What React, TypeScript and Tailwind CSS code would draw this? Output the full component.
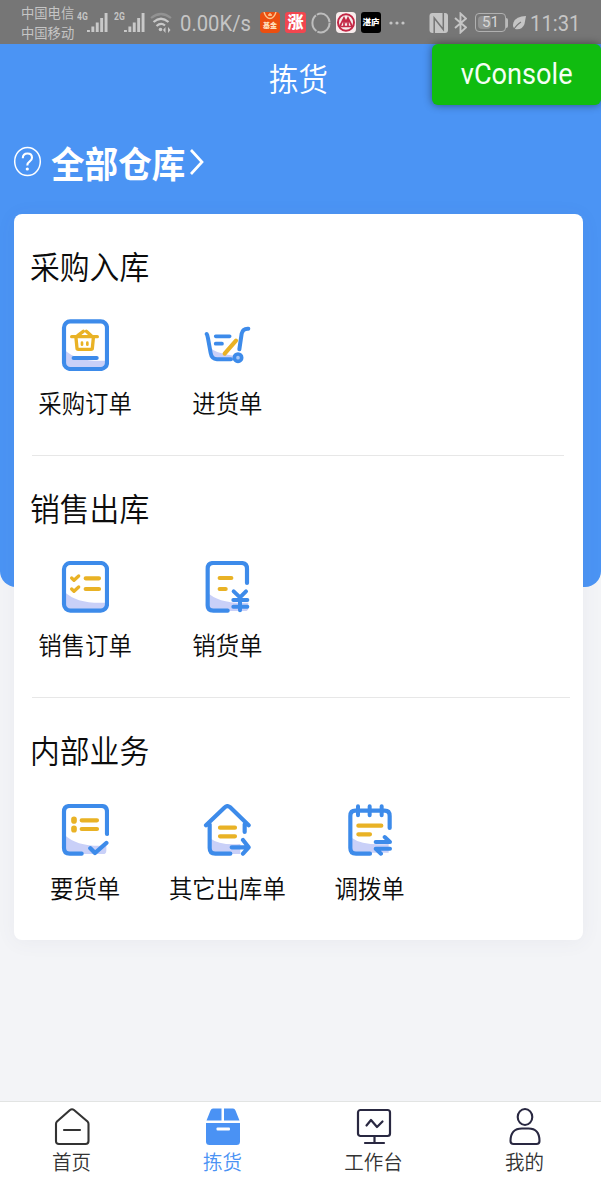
import type { ReactNode } from 'react'

const BLUE = '#3d8bea'
const GOLD = '#e9b225'
const SHADE = '#c9d0f8'

interface Entry {
  label: string
  icon: ReactNode
}

interface Section {
  title: string
  entries: Entry[]
  divider?: string
}

function EntryIcon({ children }: { children: ReactNode }) {
  return (
    <svg
      width="48"
      height="52"
      viewBox="0 0 144 156"
      fill="none"
      stroke={BLUE}
      strokeWidth="12.5"
      strokeLinecap="round"
      strokeLinejoin="round"
      className="mx-auto block"
    >
      {children}
    </svg>
  )
}

// Soft tint in the lower left corner of the paper shapes
function Shade({ d = 'M10 92 Q50 130 136 125 V140 Q136 150 126 150 H20 Q8 150 8 138 Z' }: { d?: string }) {
  return <path d={d} fill={SHADE} stroke="none" />
}

const SECTIONS: Section[] = [
  {
    title: '采购入库',
    divider: 'w-[532px]',
    entries: [
      {
        label: '采购订单',
        icon: (
          <EntryIcon>
            <Shade />
            <rect x="9" y="7" width="129" height="143" rx="19" />
            <path d="M38 117 H107" />
            <g stroke={GOLD} strokeWidth="10">
              <path d="M32 53 H109 M50 50 L67 37 M91 50 L76 37" />
              <path d="M45 57 L48 88 Q48 91 52 91 H90 Q94 91 94 88 L97 57" />
              <path d="M63 71 V77 M79 71 V77" strokeWidth="8" />
            </g>
          </EntryIcon>
        ),
      },
      {
        label: '进货单',
        icon: (
          <EntryIcon>
            <Shade d="M20 84 Q36 104 92 110 V122 H34 Q25 120 20 84 Z" />
            <path d="M11 45 Q13 47 15 58 L23 102 Q26 120 42 121 H84" strokeWidth="12" />
            <path d="M38 52 H80 M38 74 H57" strokeWidth="11" />
            <path d="M65 104 L99 65" stroke={GOLD} />
            <path d="M136 29 Q119 28 116 44 L109 91" strokeWidth="12" />
            <circle cx="105" cy="116" r="11" strokeWidth="11" fill="#a8c8f6" />
          </EntryIcon>
        ),
      },
    ],
  },
  {
    title: '销售出库',
    divider: 'w-[538px]',
    entries: [
      {
        label: '销售订单',
        icon: (
          <EntryIcon>
            <Shade />
            <rect x="9" y="6" width="129" height="143" rx="19" />
            <g stroke={GOLD}>
              <path d="M74 52 H114 M74 84 H114" />
              <path d="M32 51 L39 58 L53 45 M32 84 L39 91 L53 78" strokeWidth="10" />
            </g>
          </EntryIcon>
        ),
      },
      {
        label: '销货单',
        icon: (
          <EntryIcon>
            <Shade />
            <path d="M132 66 V23 Q132 6 115 6 H31 Q14 6 14 23 V133 Q14 149 31 149 H74" />
            <path d="M50 51 H85 M50 84 H68" stroke={GOLD} />
            <path d="M92 91 L111 109 L129 91 M111 108 V148 M91 117 H133 M91 137 H133" strokeWidth="12" />
          </EntryIcon>
        ),
      },
    ],
  },
  {
    title: '内部业务',
    entries: [
      {
        label: '要货单',
        icon: (
          <EntryIcon>
            <Shade />
            <path d="M138 90 V23 Q138 6 121 6 H26 Q9 6 9 23 V132 Q9 149 26 149 H62" />
            <path d="M88 133 L102 147 L136 117" strokeWidth="13" />
            <g stroke={GOLD}>
              <path d="M62 49 H108 M62 75 H108" />
              <path d="M39 46 V51 M39 73 V77" strokeWidth="17" />
            </g>
          </EntryIcon>
        ),
      },
      {
        label: '其它出库单',
        icon: (
          <EntryIcon>
            <Shade d="M20 102 Q50 125 112 120 V150 H34 Q20 148 20 132 Z" />
            <path d="M9 64 L64 11 Q73 2 83 11 L137 64 M20 61 V132 Q20 149 37 149 H82 M125 61 V84" />
            <path d="M86 130 H134 M120 108 L137 130 L120 149" />
            <path d="M51 71 H96 M51 97 H96" stroke={GOLD} />
          </EntryIcon>
        ),
      },
      {
        label: '调拨单',
        icon: (
          <EntryIcon>
            <Shade d="M18 102 Q48 125 128 120 V146 H34 Q14 148 14 132 Z" />
            <path d="M131 72 V36 Q131 20 116 20 H28 Q13 20 13 36 V132 Q13 149 30 149 H72" />
            <path d="M36 7 V34 M71 7 V34 M107 7 V34" strokeWidth="12" />
            <path d="M37 65 H106 M37 91 H72" stroke={GOLD} />
            <path d="M89 114 H132 L116 99 M132 134 H89 L105 149" strokeWidth="12" />
          </EntryIcon>
        ),
      },
    ],
  },
]

const TABS = [
  {
    label: '首页',
    icon: (
      <svg width="36" height="40" viewBox="0 0 36 40" fill="none" stroke="#333" strokeWidth="2.1" strokeLinejoin="round" strokeLinecap="round">
        <path d="M16 3 Q18 1.5 20 3 L33.5 14.5 Q34.5 15.4 34.5 17 V34 Q34.5 37 31.5 37 H5 Q2 37 2 34 V17 Q2 15.4 3 14.5 Z" />
        <path d="M10 23 H26" />
      </svg>
    ),
  },
  {
    label: '拣货',
    active: true,
    icon: (
      <svg width="36" height="40" viewBox="0 0 36 40" fill="#4a92f4">
        <path d="M8 1.5 H16.5 V13.5 H1.5 L5.5 3.5 Q6.3 1.5 8 1.5 Z M19 1.5 H28 Q29.7 1.5 30.5 3.5 L34.5 13.5 H19 Z" />
        <path d="M1 16 H35 V34.5 Q35 38 31.5 38 H4.5 Q1 38 1 34.5 Z" />
        <rect x="11.5" y="20.5" width="13.5" height="3" rx="1" fill="#fff" />
      </svg>
    ),
  },
  {
    label: '工作台',
    icon: (
      <svg width="36" height="40" viewBox="0 0 36 40" fill="none" stroke="#292841" strokeWidth="2.2" strokeLinejoin="round" strokeLinecap="round">
        <rect x="2" y="3" width="32" height="26" rx="2.5" />
        <path d="M18.5 29 V36 M9 36 H28" />
        <path d="M10.5 18.5 L15 13 L21 20 L26.5 14.5" />
      </svg>
    ),
  },
  {
    label: '我的',
    icon: (
      <svg width="36" height="40" viewBox="0 0 36 40" fill="none" stroke="#292841" strokeWidth="2.1" strokeLinejoin="round">
        <ellipse cx="18" cy="10" rx="7.3" ry="8" />
        <path d="M3.5 34 Q3.5 21.5 15 21.5 H21.5 Q32.5 21.5 32.5 34 Q32.5 37 29.5 37 H6.5 Q3.5 37 3.5 34 Z" />
      </svg>
    ),
  },
]

function Signal() {
  return (
    <svg className="shrink-0" width="21" height="21" viewBox="0 0 21 21" fill="#c9c9c9">
      <path d="M0 18h2.9v2H0zM4.4 14.5h2.9V20H4.4zM8.8 10.5h2.9V20H8.8zM13.2 6h2.9v14h-2.9zM17.6 1h2.9v19h-2.9z" />
    </svg>
  )
}

function StatusBar() {
  return (
    <div className="flex h-11 items-center overflow-hidden bg-[#767676] pt-px pl-[21px] font-[Roboto,'Noto_Sans_CJK_SC',sans-serif] text-[#c5c5c5]">
      <div className="w-[56px] shrink-0 pt-[3px] text-[13.3px] leading-5 whitespace-nowrap">
        <p>中国电信</p>
        <p>中国移动</p>
      </div>
      <span className="mb-3 w-[10px] shrink-0 text-[11px] leading-none font-bold">
        <span className="inline-block origin-left scale-x-[0.78]">4G</span>
      </span>
      <Signal />
      <span className="mb-3 ml-[6px] w-[10px] shrink-0 text-[11px] leading-none font-bold">
        <span className="inline-block origin-left scale-x-[0.78]">2G</span>
      </span>
      <Signal />
      <svg className="ml-[4px] shrink-0" width="24" height="22" viewBox="0 0 24 22" fill="none" stroke="#c9c9c9" strokeWidth="2.2">
        <path d="M2 6 Q12 -2 22 6" stroke="#929292" />
        <path d="M4.5 10 Q12 3.5 19.5 10 M7.5 14 Q12 10 16 13.5" />
        <circle cx="11.5" cy="17.5" r="1.8" fill="#c9c9c9" stroke="none" />
        <path d="M16.5 15 L14 18 L16.5 21 Z M19 15 L21.5 18 L19 21 Z" fill="#c9c9c9" stroke="none" />
      </svg>
      <span className="ml-[7px] w-[80px] shrink-0 pt-[3px] text-[22px] leading-none">
        <span className="inline-block origin-left scale-x-[0.92]">0.00K/s</span>
      </span>
      <div className="flex w-[144px] shrink-0 items-center gap-[5px]">
        <div className="relative h-[21px] w-[20px] overflow-hidden rounded-[4px] bg-[#ec4f10] text-center text-[7px] leading-[29px] font-black whitespace-nowrap text-[#ffe0bc]">
          <svg className="absolute top-0 left-[3px]" width="14" height="8" viewBox="0 0 14 8" fill="none" stroke="#ffc58d" strokeWidth="1.4">
            <path d="M1 0 Q3 6.5 7 6.5 Q11 6.5 13 0 M7 1 V4 M5 3 H9" />
          </svg>
          <p>基金</p>
        </div>
        <div className="flex h-[21px] w-[21px] items-center justify-center rounded-[3px] bg-[#f2464f] text-[16px] leading-none font-black text-white">涨</div>
        <svg width="20" height="22" viewBox="0 0 20 22" fill="none" stroke="#bdbdbd" strokeWidth="2">
          <ellipse cx="10" cy="11" rx="8.6" ry="9.4" strokeDasharray="17.8 1.1" />
        </svg>
        <svg width="20" height="21" viewBox="0 0 20 21">
          <rect width="20" height="21" rx="4" fill="#f8eded" />
          <ellipse cx="10" cy="10.5" rx="8" ry="8.3" fill="none" stroke="#c32746" strokeWidth="2" />
          <path d="M4 14 L8 6 L10 10 L12 6 L16 14 M8 7 V14 M12 7 V14 M4 14.5 H16" fill="none" stroke="#c32746" strokeWidth="1.7" />
        </svg>
        <div className="flex h-[21px] w-[20px] items-center justify-center rounded-[3px] bg-black text-[8.5px] leading-none font-black whitespace-nowrap text-white">湛庐</div>
      </div>
      <svg className="-ml-[15px] shrink-0" width="17" height="4" viewBox="0 0 17 4" fill="#c5c5c5">
        <circle cx="2" cy="2" r="1.6" />
        <circle cx="8" cy="2" r="1.6" />
        <circle cx="14" cy="2" r="1.6" />
      </svg>
      <svg className="ml-[23px] shrink-0" width="20" height="22" viewBox="0 0 20 22">
        <rect x="0.5" y="1" width="18.5" height="20" rx="3" fill="#c5c5c5" />
        <path d="M5.2 21 V6 L14.3 17.5 V1" fill="none" stroke="#767676" strokeWidth="1.5" />
      </svg>
      <svg className="ml-[5px] shrink-0" width="13" height="22" viewBox="0 0 13 22" fill="none" stroke="#c5c5c5" strokeWidth="1.9">
        <path d="M1 6 L12 15.5 L6.5 20.5 V1.5 L12 6.5 L1 16" />
      </svg>
      <div className="relative ml-[8px] flex h-[19px] w-[31px] shrink-0 items-center justify-center rounded-[4px] border-[1.5px] border-[#b0b0b0] text-[15px] leading-none text-[#d6d6d6]">
        <span className="absolute top-[2px] bottom-[2px] left-[2px] w-[13px] rounded-sm bg-[#929292]" />
        <span className="relative">51</span>
      </div>
      <span className="h-[10px] w-[2px] shrink-0 rounded-r bg-[#bababa]" />
      <svg className="ml-[4px] shrink-0" width="15" height="18" viewBox="0 0 15 18">
        <path d="M14 2 Q4 2 1.5 8.5 Q0 13 3 15 Q10 16.5 12.5 10 Z" fill="#c5c5c5" />
        <path d="M1 17 Q4 11 9 8" fill="none" stroke="#767676" strokeWidth="1.1" />
      </svg>
      <span className="ml-[3px] pt-[3px] text-[22px] leading-none">
        <span className="inline-block origin-left scale-x-[0.92]">11:31</span>
      </span>
    </div>
  )
}

function SectionBlock({ section }: { section: Section }) {
  return (
    <section className="h-[242.4px]">
      <h2 className="ml-4 flex h-[105px] items-center pb-[2px] text-[29.8px] leading-none font-[350] text-[#0c0c0c]">
        <span className="scale-y-[1.07]">{section.title}</span>
      </h2>
      <div className="grid grid-cols-4">
        {section.entries.map((entry) => (
          <div key={entry.label} className="text-center">
            {entry.icon}
            <p className="mt-[17px] mb-[2px] scale-y-[1.07] text-[23.4px] leading-7 font-[350] whitespace-nowrap text-[#0c0c0c]">{entry.label}</p>
          </div>
        ))}
      </div>
      {section.divider && <hr className={`mt-[37px] ml-[18px] border-[#e7e7e7] ${section.divider}`} />}
    </section>
  )
}

export default function App() {
  return (
    <div className="flex h-[1179px] w-[601px] flex-col overflow-hidden bg-[#f3f4f7] font-['Noto_Sans_CJK_SC',sans-serif]">
      <StatusBar />
      <div className="relative h-[543px] shrink-0 rounded-b-[16px] bg-[#4b94f4]">
        <header className="flex h-[70px] items-center justify-center pb-[2px] text-[29.5px] leading-none text-white">
          <h1 className="-translate-x-[2px] scale-y-[1.06] font-[350]">拣货</h1>
        </header>
        <button className="absolute top-0 right-0 h-[61px] w-[169px] rounded-[6px] bg-[#10bc10] text-center font-[Roboto,sans-serif] text-[28px] text-[#f4fff4] shadow-[0_0_8px_rgba(0,0,0,0.45)]">
          <span className="inline-block scale-x-[0.97] scale-y-[1.04]">vConsole</span>
        </button>

        <div className="flex h-[100px] items-center pl-[13px] text-white">
          <svg width="29" height="31" viewBox="0 0 29 31" fill="none" stroke="#fff" strokeWidth="1.5" className="mb-[5px]">
            <ellipse cx="14.5" cy="15.5" rx="12.8" ry="14" />
            <path d="M9.8 12.3 Q9.8 7.5 14.5 7.5 Q19 7.5 19 11.8 Q19 14 16.5 15.7 Q14.3 17.2 14.3 19.5" strokeWidth="2.1" />
            <circle cx="14.3" cy="23" r="1.6" fill="#fff" stroke="none" />
          </svg>
          <span className="mb-[2px] ml-[9px] scale-y-[1.08] text-[33.6px] leading-none font-bold">全部仓库</span>
          <svg width="16" height="30" viewBox="0 0 16 30" fill="none" stroke="#fff" strokeWidth="2.7" className="mb-[5px] ml-[4px]">
            <path d="M2 3 L13 15 L2 27" />
          </svg>
        </div>

        <main className="ml-[14px] h-[726px] w-[569px] rounded-[8px] bg-white shadow-[0_2px_20px_rgba(80,90,120,0.06)]">
          {SECTIONS.map((section) => (
            <SectionBlock key={section.title} section={section} />
          ))}
        </main>
      </div>

      <nav className="mt-auto h-[78px] border-t border-[#e2e4e3] bg-white">
        <div className="-ml-[4px] grid w-[604px] grid-cols-4 pt-[5px]">
          {TABS.map((tab) => (
            <div key={tab.label} className={`flex flex-col items-center ${tab.active ? 'text-[#4a92f4]' : 'text-[#333333]'}`}>
              {tab.icon}
              <p className="mt-[3px] scale-y-[1.06] text-[19.5px] leading-6 font-[350]">{tab.label}</p>
            </div>
          ))}
        </div>
      </nav>
    </div>
  )
}
